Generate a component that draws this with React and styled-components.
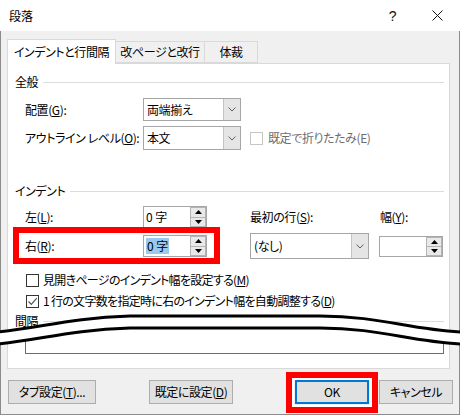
import React from 'react';
import styled, { createGlobalStyle } from 'styled-components';

const Global = createGlobalStyle`
  html, body { margin: 0; padding: 0; background: #fff; }
  body {
    font-family: "Noto Sans CJK JP", "Noto Sans", sans-serif;
    font-size: 12px;
    color: #000;
  }
  * { box-sizing: border-box; }
`;

const Window = styled.div`
  position: relative;
  width: 460px;
  height: 415px;
  background: #fff;
  overflow: hidden;
  font-feature-settings: "palt";
  letter-spacing: -0.4px;
  line-height: 1;
`;

const TitleBar = styled.div`
  height: 31px;
  display: flex;
  align-items: center;
  padding-left: 9px;
  background: #fff;
`;

const Title = styled.div`
  flex: 1;
  font-size: 12px;
  letter-spacing: 0;
`;

const TitleButton = styled.div`
  width: 45px;
  height: 31px;
  display: flex;
  align-items: center;
  justify-content: center;
  font-family: "Liberation Sans", sans-serif;
  font-size: 14px;
  color: #111;
`;

const Body = styled.div`
  height: 384px;
  background: #f0f0f0;
  border-left: 1px solid #8c8c8c;
  border-right: 1px solid #8c8c8c;
  border-bottom: 1px solid #8c8c8c;
  padding: 8px 0 0 6px;
`;

const TabList = styled.div`
  display: flex;
  align-items: flex-end;
  height: 24px;
`;

const Tab = styled.div`
  width: ${p => p.$w}px;
  height: ${p => (p.$active ? 25 : 22)}px;
  margin-bottom: ${p => (p.$active ? -1 : 0)}px;
  margin-left: ${p => (p.$first ? 0 : -1)}px;
  background: ${p => (p.$active ? '#fff' : '#f0f0f0')};
  border: 1px solid #d9d9d9;
  border-bottom: ${p => (p.$active ? 'none' : '1px solid #d9d9d9')};
  display: flex;
  align-items: center;
  justify-content: center;
  padding-bottom: ${p => (p.$active ? 1 : 0)}px;
  position: relative;
  z-index: ${p => (p.$active ? 2 : 1)};
`;

const Panel = styled.div`
  width: 443px;
  height: 306px;
  background: #fff;
  border: 1px solid #d9d9d9;
  padding: 8px 5px 0 7px;
  display: flex;
  flex-direction: column;
`;

const SectionHeader = styled.div`
  display: flex;
  align-items: center;
  height: 20px;
  margin-top: ${p => p.$mt || 0}px;
  flex-shrink: 0;
  &::after {
    content: '';
    flex: 1;
    height: 1px;
    background: #dcdcdc;
    margin-left: 5px;
  }
`;

const FieldRow = styled.div`
  display: flex;
  align-items: center;
  height: ${p => p.$h}px;
  margin-top: ${p => p.$mt || 0}px;
  padding-left: 10px;
  flex-shrink: 0;
`;

const Label = styled.div`
  width: ${p => p.$w || 118}px;
  flex-shrink: 0;
  white-space: nowrap;
`;

const Combo = styled.div`
  width: ${p => p.$w}px;
  height: ${p => p.$h}px;
  border: 1px solid #a6a6a6;
  background: #fff;
  display: flex;
  align-items: stretch;
  flex-shrink: 0;
`;

const ComboText = styled.div`
  flex: 1;
  display: flex;
  align-items: center;
  padding-left: 3px;
`;

const ComboArrow = styled.div`
  width: 17px;
  background: #e5e5e5;
  border-left: 1px solid #c4c4c4;
  display: flex;
  align-items: center;
  justify-content: center;
`;

const Spin = styled.div`
  width: ${p => p.$w}px;
  height: ${p => p.$h}px;
  border: 1px solid #a6a6a6;
  background: #fff;
  display: flex;
  flex-shrink: 0;
`;

const SpinText = styled.div`
  flex: 1;
  display: flex;
  align-items: center;
  padding-left: 2px;
  letter-spacing: 0;
`;

const Selected = styled.span`
  background: #99c9ef;
  padding: 2px 1px;
`;

const SpinButtons = styled.div`
  width: 16px;
  display: flex;
  flex-direction: column;
`;

const SpinButton = styled.div`
  flex: 1;
  background: #e9e9e9;
  border: 1px solid #b4b4b4;
  margin-top: ${p => (p.$down ? -1 : 0)}px;
  display: flex;
  align-items: center;
  justify-content: center;
`;

const Check = styled.div`
  width: 13px;
  height: 13px;
  border: 1px solid ${p => (p.$disabled ? '#c6c6c6' : '#333')};
  background: #fff;
  flex-shrink: 0;
  display: flex;
  align-items: center;
  justify-content: center;
  margin-left: ${p => p.$ml || 0}px;
  margin-right: ${p => p.$mr || 4}px;
`;

const CheckLabel = styled.div`
  white-space: nowrap;
  letter-spacing: ${p => (p.$disabled ? -0.4 : -0.7)}px;
  color: ${p => (p.$disabled ? '#6d6d6d' : '#000')};
`;

const CheckRow = styled.div`
  display: flex;
  align-items: center;
  height: 18px;
  margin-top: ${p => p.$mt || 0}px;
  padding-left: 11px;
  flex-shrink: 0;
`;

const IndentGrid = styled.div`
  display: grid;
  grid-template-columns: 225px 129px 64px;
  grid-template-rows: 22px 26px;
  row-gap: 5px;
  margin: 5px 0 0 10px;
  align-items: center;
  flex-shrink: 0;
`;

const Cell = styled.div`
  display: flex;
  align-items: center;
  height: 100%;
  padding-left: ${p => p.$pl || 0}px;
`;

const Highlighted = styled.div`
  position: relative;
  display: flex;
  align-items: center;
  width: 182px;
  height: 22px;
  &::after {
    content: '';
    position: absolute;
    left: -12px;
    right: -13px;
    top: -8px;
    bottom: -7px;
    border: 6px solid #ff0000;
    pointer-events: none;
  }
`;

const PreviewBox = styled.div`
  height: 23px;
  margin-left: 10px;
  border: 1px solid #6d6d6d;
  border-top: none;
  flex-shrink: 0;
`;

const ButtonBar = styled.div`
  display: flex;
  align-items: center;
  margin-top: 11px;
  padding-left: 1px;
`;

const Button = styled.div`
  position: relative;
  width: ${p => p.$w}px;
  height: 24px;
  margin-left: ${p => p.$ml || 0}px;
  background: #e1e1e1;
  border: ${p => (p.$default ? '2px solid #0078d7' : '1px solid #adadad')};
  display: flex;
  align-items: center;
  justify-content: center;
  white-space: nowrap;
  ${p => p.$marked && `
    &::after {
      content: '';
      position: absolute;
      left: -11px;
      right: -11px;
      top: -10px;
      bottom: -11px;
      border: 6px solid #ff0000;
      box-shadow: inset 0 0 0 2px #fff;
      pointer-events: none;
    }
  `}
`;

const WaveLayer = styled.svg`
  position: absolute;
  left: 0;
  top: 300px;
  width: 460px;
  height: 60px;
  pointer-events: none;
`;

const Chevron = () => (
  <svg width="8" height="5" viewBox="0 0 8 5">
    <path d="M0.5 0.5 L4 4 L7.5 0.5" fill="none" stroke="#5f5f5f" strokeWidth="1" />
  </svg>
);

const TriUp = () => (
  <svg width="7" height="4" viewBox="0 0 7 4"><path d="M3.5 0 L7 4 L0 4 Z" fill="#000" /></svg>
);
const TriDown = () => (
  <svg width="7" height="4" viewBox="0 0 7 4"><path d="M0 0 L7 0 L3.5 4 Z" fill="#000" /></svg>
);

const SpinBox = ({ w, h, children }) => (
  <Spin $w={w} $h={h}>
    <SpinText>{children}</SpinText>
    <SpinButtons>
      <SpinButton><TriUp /></SpinButton>
      <SpinButton $down><TriDown /></SpinButton>
    </SpinButtons>
  </Spin>
);

const ComboBox = ({ w, h, children }) => (
  <Combo $w={w} $h={h}>
    <ComboText>{children}</ComboText>
    <ComboArrow><Chevron /></ComboArrow>
  </Combo>
);

const top = 'M-2,32 C40,28 70,18 130,16 L320,16 C380,16 410,30 462,32';
const bottom = 'M-2,44 C40,40 70,30 130,28 L320,28 C380,28 410,42 462,44';
const fill = 'M-2,32 C40,28 70,18 130,16 L320,16 C380,16 410,30 462,32 L462,44 C410,42 380,28 320,28 L130,28 C70,30 40,40 -2,44 Z';

export default function App() {
  return (
    <>
      <Global />
      <Window>
        <TitleBar>
          <Title>段落</Title>
          <TitleButton>?</TitleButton>
          <TitleButton>
            <svg width="11" height="11" viewBox="0 0 11 11">
              <path d="M0.5 0.5 L10.5 10.5 M10.5 0.5 L0.5 10.5" stroke="#111" strokeWidth="1" />
            </svg>
          </TitleButton>
        </TitleBar>
        <Body>
          <TabList>
            <Tab $w={109} $active $first>インデントと行間隔</Tab>
            <Tab $w={90}>改ページと改行</Tab>
            <Tab $w={54}>体裁</Tab>
          </TabList>
          <Panel>
            <SectionHeader>全般</SectionHeader>
            <FieldRow $h={23} $mt={6}>
              <Label>配置(<u>G</u>):</Label>
              <ComboBox w={98} h={23}>両端揃え</ComboBox>
            </FieldRow>
            <FieldRow $h={24} $mt={5}>
              <Label>アウトライン レベル(<u>O</u>):</Label>
              <ComboBox w={98} h={24}>本文</ComboBox>
              <Check $disabled $ml={9} $mr={5} />
              <CheckLabel $disabled>既定で折りたたみ(E)</CheckLabel>
            </FieldRow>
            <SectionHeader $mt={31}>インデント</SectionHeader>
            <IndentGrid>
              <Cell>
                <Label>左(<u>L</u>):</Label>
                <SpinBox w={64} h={22}>0 字</SpinBox>
              </Cell>
              <Cell>最初の行(<u>S</u>):</Cell>
              <Cell $pl={1}>幅(<u>Y</u>):</Cell>
              <Cell>
                <Highlighted>
                  <Label>右(<u>R</u>):</Label>
                  <SpinBox w={64} h={22}><Selected>0 字</Selected></SpinBox>
                </Highlighted>
              </Cell>
              <Cell>
                <ComboBox w={119} h={26}>(なし)</ComboBox>
              </Cell>
              <Cell>
                <SpinBox w={64} h={21}></SpinBox>
              </Cell>
            </IndentGrid>
            <CheckRow $mt={12}>
              <Check />
              <CheckLabel>見開きページのインデント幅を設定する(<u>M</u>)</CheckLabel>
            </CheckRow>
            <CheckRow $mt={3}>
              <Check>
                <svg width="11" height="11" viewBox="0 0 11 11">
                  <path d="M1.5 5.5 L4.3 8.3 L9.8 2.2" fill="none" stroke="#555" strokeWidth="1.2" />
                </svg>
              </Check>
              <CheckLabel>1 行の文字数を指定時に右のインデント幅を自動調整する(<u>D</u>)</CheckLabel>
            </CheckRow>
            <SectionHeader $mt={1}>間隔</SectionHeader>
            <PreviewBox />
          </Panel>
          <ButtonBar>
            <Button $w={88}>タブ設定(<u>T</u>)...</Button>
            <Button $w={84} $ml={53}>既定に設定(<u>D</u>)</Button>
            <Button $w={74} $ml={62} $default $marked>OK</Button>
            <Button $w={74} $ml={10}>キャンセル</Button>
          </ButtonBar>
        </Body>
        <WaveLayer viewBox="0 0 460 60">
          <path d={fill} fill="#fff" />
          <path d={top} fill="none" stroke="#000" strokeWidth="3" />
          <path d={bottom} fill="none" stroke="#000" strokeWidth="3" />
        </WaveLayer>
      </Window>
    </>
  );
}
